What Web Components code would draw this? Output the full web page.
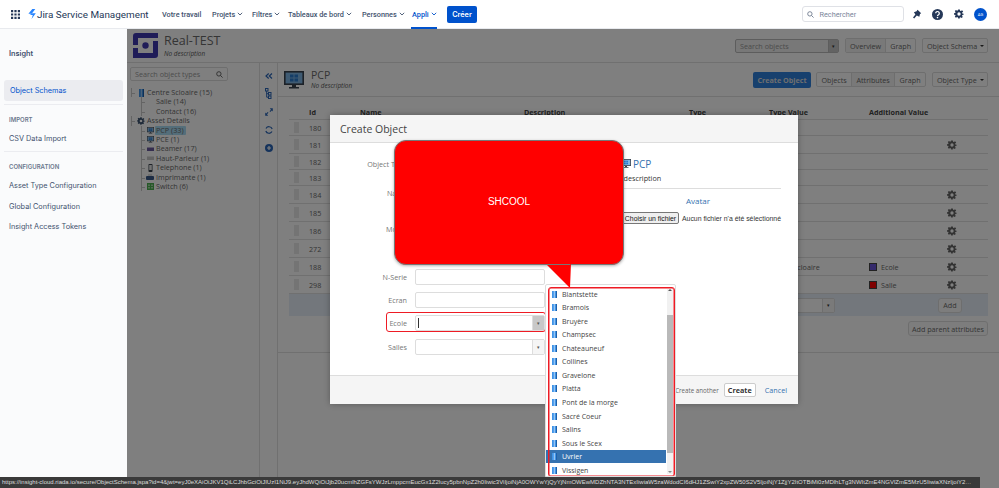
<!DOCTYPE html>
<html>
<head>
<meta charset="utf-8">
<title>Insight</title>
<style>
  html, body { margin: 0; height: 100%; overflow: hidden; background: #fff; }
  body { font-family: "Open Sans", "Liberation Sans", sans-serif; }
</style>
</head>
<body>
<insight-page></insight-page>
<script>
const caret = `<svg class="chev" width="6" height="4" viewBox="0 0 6 4"><path d="M.8.8 3 3 5.2.8" fill="none" stroke="currentColor" stroke-width=".9"/></svg>`;
const gear = `<svg width="10" height="10" viewBox="0 0 24 24"><path fill="currentColor" fill-rule="evenodd" d="M10 1h4l.6 3.2 2 .8 2.7-1.800 2.800 2.800L19.300 8.700l.8 2L23 11.300v2.400l-2.900.6-.8 2 1.800 2.700-2.800 2.800-2.700-1.800-2 .8L14 23h-4l-.6-2.900-2-.8-2.700 1.800-2.800-2.800 1.800-2.700-.8-2L0 13.700v-3.400l2.900-.6.8-2L1.900 5l2.800-2.800 2.700 1.800 2-.8zM12 8a4 4 0 1 0 0 8 4 4 0 0 0 0-8z"/></svg>`;
const bookIcon = `<svg width="5" height="7" viewBox="0 0 7 9" preserveAspectRatio="none"><rect width="7" height="9" fill="#3f94e8"/><rect x="2.600" width="1" height="9" fill="#d7e9fa"/><rect x="5.600" width="1.400" height="9" fill="#1d5fa8"/></svg>`;
const pcIcon = (w, h) => `<svg width="${w}" height="${h}" viewBox="0 0 20 18"><rect x=".8" y=".8" width="18.400" height="12.400" fill="#7fb6e6" stroke="#39424e" stroke-width="1.600"/><path d="M6 3.500h3.500v3H6zM10.500 3.500H14v3h-3.500zM6 7.500h3.500v3H6zM10.500 7.500H14v3h-3.500z" fill="#2b7cd0"/><path d="M8 14h4v2h3v1.500H5V16h3z" fill="#39424e"/></svg>`;

function shadow(host, html) {
  host.attachShadow({mode: "open"}).innerHTML = html;
}

class JiraTopbar extends HTMLElement {
  connectedCallback() {
    const items = [["Votre travail", 0, 50], ["Projets", 1, 40], ["Filtres", 1, 36], ["Tableaux de bord", 1, 74], ["Personnes", 1, 50], ["Appli", 1, 25]];
    shadow(this, `
<style>
  :host { display: flex; align-items: center; height: 29px; padding-left: 11px; background: #fff; color: #42526e;
    font-family: Roboto, Inter, sans-serif; font-size: 7.300px; border-bottom: 1px solid #e8eaee; position: relative; box-sizing: border-box; }
  .logo { display: flex; align-items: center; gap: 1px; margin-left: 8px; color: #253858; font-size: 9.900px; width: 134px; flex: none; white-space: nowrap; }
  nav { display: flex; height: 100%; }
  nav span { display: flex; align-items: center; gap: 2px; position: relative; font-weight: 500; white-space: nowrap; }
  nav .on { color: #0052cc; }
  nav .on::after { content: ""; position: absolute; left: -1px; right: 0; bottom: -1px; height: 2px; background: #0052cc; }
  .create { margin-left: 10px; width: 30px; height: 17px; border: 0; border-radius: 2px; background: #0052cc; color: #fff;
    font: 600 7.300px Inter, Roboto, sans-serif; padding: 0; }
  .right { margin-left: auto; display: flex; align-items: center; gap: 10.500px; padding-right: 12px; color: #253858; }
  .search { display: flex; align-items: center; gap: 6px; width: 102px; height: 16px; box-sizing: border-box; border: 1px solid #dfe1e6; border-radius: 3px;
    padding-left: 4px; color: #7a869a; margin-right: -2.500px; font-size: 7.300px; }
  .avatar { width: 13px; height: 13px; border-radius: 50%; background: #0052cc; color: #fff; font-size: 4px; display: flex; align-items: center; justify-content: center; }
</style>
<svg width="9" height="9" viewBox="0 0 9 9" fill="#253858"><path d="M0 0h2.200v2.200H0zM3.400 0h2.200v2.200H3.400zM6.800 0H9v2.200H6.800zM0 3.400h2.200v2.200H0zM3.400 3.400h2.200v2.200H3.400zM6.800 3.400H9v2.200H6.800zM0 6.800h2.200V9H0zM3.400 6.800h2.200V9H3.400zM6.800 6.800H9V9H6.800z"/></svg>
<div class="logo"><svg width="8" height="10" viewBox="0 0 8 10"><path fill="#2684ff" d="M4.300 0 .4 4.700h3.300L7.300 0zM4.600 4.300h3.200L3.500 10l1.300-4H1.700z"/></svg>Jira Service Management</div>
<nav>${items.map(([t, c, w], i) => `<span class="${i == 5 ? "on" : ""}" style="width:${w}px">${t}${c ? caret : ""}</span>`).join("")}</nav>
<button class="create">Créer</button>
<div class="right">
  <div class="search"><svg width="7" height="7" viewBox="0 0 8 8"><circle cx="3.300" cy="3.300" r="2.500" fill="none" stroke="#6b778c"/><path d="m5.200 5.200 2.300 2.300" stroke="#6b778c"/></svg>Rechercher</div>
  <svg width="10" height="10" viewBox="0 0 10 10"><path fill="#253858" d="M5.500.8 9.200 4.300 8 5 7.300 7.800 4.800 6.500 2.200 9.500 1 8.600 3.400 5.500 1.900 3.300 4.600 2.300z"/></svg>
  <svg width="11" height="11" viewBox="0 0 11 11"><circle cx="5.500" cy="5.500" r="5.500" fill="#253858"/><path d="M3.700 4.300a1.800 1.800 0 1 1 2.800 1.500c-.7.400-1 .7-1 1.300" fill="none" stroke="#fff" stroke-width="1.200"/><circle cx="5.500" cy="8.600" r=".8" fill="#fff"/></svg>
  <span style="display:flex;color:#253858">${gear}</span>
  <div class="avatar">AG</div>
</div>`);
  }
}
customElements.define("jira-topbar", JiraTopbar);

class InsightSidebar extends HTMLElement {
  connectedCallback() {
    shadow(this, `
<style>
  :host { display: block; width: 127px; flex: none; background: #fafbfc; color: #42526e; font-family: Inter, Roboto, sans-serif; font-size: 7.300px; box-sizing: border-box; padding: 0 4px; }
  .title { font-weight: 600; padding: 20px 5px 0; height: 51px; box-sizing: border-box; }
  .on { height: 21px; background: #ebecf0; border-radius: 3px; color: #0052cc; display: flex; align-items: center; padding-left: 6px; margin-bottom: 3px; }
  hr { border: 0; border-top: 1px solid #ebecf0; margin: 0; }
  h4 { margin: 0; font-size: 6px; font-weight: 600; color: #6b778c; padding: 11px 5px 4px; line-height: 8px; }
  a { display: flex; align-items: center; height: 20.700px; padding-left: 5px; }
</style>
<div class="title">Insight</div>
<div class="on">Object Schemas</div>
<hr>
<h4>IMPORT</h4>
<a>CSV Data Import</a>
<hr style="margin-top:2.300px">
<h4>CONFIGURATION</h4>
<a>Asset Type Configuration</a>
<a>Global Configuration</a>
<a>Insight Access Tokens</a>`);
  }
}
customElements.define("insight-sidebar", InsightSidebar);

class TypeTree extends HTMLElement {
  connectedCallback() {
    const swatch = c => `<svg width="7" height="7" viewBox="0 0 7 7"><rect y="1.500" width="7" height="3.500" fill="${c}"/></svg>`;
    const rows = [
      ["Centre Scloaire (15)", 0, bookIcon.replace('height="7"', 'height="8"')],
      ["Salle (14)", 1, ""],
      ["Contact (16)", 1, ""],
      ["Asset Details", 0, `<svg width="8" height="8" viewBox="0 0 24 24" style="color:#39506e">${gear.replace(/<svg[^>]*>|<\/svg>/g, "")}</svg>`],
      ["PCP (33)", 1, pcIcon(7, 7), "sel"],
      ["PCE (1)", 1, pcIcon(7, 7)],
      ["Beamer (17)", 1, swatch("#6a5a9e")],
      ["Haut-Parleur (1)", 1, swatch("#c8c8c8")],
      ["Telephone (1)", 1, `<svg width="7" height="8" viewBox="0 0 7 8"><rect x="1.500" width="4" height="8" rx=".8" fill="#39424e"/><rect x="2.200" y="1" width="2.600" height="5" fill="#e8e8e8"/></svg>`],
      ["Imprimante (1)", 1, `<svg width="8" height="7" viewBox="0 0 8 7"><rect y="2" width="8" height="4" rx="1" fill="#3b5a8a"/><rect x="2" width="4" height="2" fill="#ddd"/></svg>`],
      ["Switch (6)", 1, `<svg width="7" height="7" viewBox="0 0 7 7"><rect width="7" height="7" fill="#4cb050"/><path d="M1 1.500h2v1.500H1zM4 1.500h2v1.500H4zM1 4h2v1.500H1zM4 4h2v1.500H4z" fill="#a5dba7"/></svg>`]
    ];
    shadow(this, `
<style>
  :host { display: block; color: #6a6a6a; font-size: 7.200px; line-height: 9.400px; padding-top: 7px; }
  .row { display: flex; align-items: center; gap: 2px; height: 9.400px; white-space: nowrap; position: relative; padding-left: 7px; }
  .row.sub { padding-left: 16px; }
  .row.noicon { padding-left: 26px; }
  .row::before { content: ""; position: absolute; left: 1px; top: 0; bottom: 0; border-left: 1px solid #c8c8c8; }
  .row.sub::before { left: 11px; }
  .row::after { content: ""; position: absolute; left: 1px; top: 5px; width: 4px; border-top: 1px solid #c8c8c8; }
  .row.sub::after { left: 11px; }
  .sel span { background: #a9dcf5; border-radius: 1px; padding: 0 2px 0 1px; margin-left: -1px; }
  .wrap { display: inline-flex; width: 8px; justify-content: center; flex: none; }
</style>
${rows.map(([t, sub, icon, sel]) => `<div class="row ${sub ? "sub" : ""} ${icon ? "" : "noicon"} ${sel || ""}">${icon ? `<i class="wrap">${icon}</i>` : ""}<span>${t}</span></div>`).join("")}`);
  }
}
customElements.define("type-tree", TypeTree);

class AttrTable extends HTMLElement {
  connectedCallback() {
    const rows = [
      ["180", 16, 0], ["181", 18, 1], ["182", 16, 0], ["183", 16, 0], ["184", 18, 1], ["185", 18, 1], ["186", 18, 1], ["272", 18, 1],
      ["188", 18, 1, "Centre Scloaire", "Ecole", "#6a55d8"], ["298", 18, 1, "", "Salle", "#ff0000"]
    ];
    shadow(this, `
<style>
  :host { display: block; margin: 7px 11px 0; font-size: 7.200px; color: #6a6a6a; }
  .row { display: grid; grid-template-columns: 20px 51px 164px 165px 80px 100px 78px 1fr; align-items: center; border-bottom: 1px solid #e0e0e0; box-sizing: border-box; }
  .head { height: 16px; font-weight: 700; color: #444; }
  .head span:last-child { grid-column: span 2; }
  .grip { width: 5px; height: 11px; background: #e8e8e8; margin-left: 5px; }
  .val { display: flex; align-items: center; gap: 4px; }
  .val b { width: 8px; height: 8px; border: 1px solid #444; box-sizing: border-box; }
  .gear { color: #666; display: flex; }
  .add { height: 22px; background: #e6eff8; display: grid; grid-template-columns: 1fr auto; align-items: center; padding: 0 26px 0 0; }
  .combo { justify-self: end; width: 100px; height: 15px; margin-right: 103px; background: #fff; border: 1px solid #ddd; border-radius: 2px; box-sizing: border-box; display: flex; justify-content: flex-end; }
  .combo i { width: 11px; border-left: 1px solid #ddd; background: #f5f5f5; font-size: 5px; font-style: normal; text-align: center; line-height: 13px; color: #333; }
  .btn { border: 1px solid #ddd; border-radius: 3px; background: #fafafa; display: inline-flex; align-items: center; justify-content: center; box-sizing: border-box; }
  .parent { display: flex; justify-content: flex-end; margin-top: 5px; padding-bottom: 16px; border-bottom: 1px solid #e0e0e0; margin-inline: -11px; padding-right: 11px; }
</style>
<div class="row head"><span></span><span>Id</span><span>Name</span><span>Description</span><span>Type</span><span>Type Value</span><span>Additional Value</span></div>
${rows.map(([id, h, g, tv, av, c]) => `<div class="row" style="height:${h}px"><div class="grip"></div><span>${id}</span><span></span><span></span><span></span><span>${tv || ""}</span><span class="val">${av ? `<b style="background:${c}"></b>${av}` : ""}</span><span class="gear">${g ? gear : ""}</span></div>`).join("")}
<div class="add"><div class="combo"><i>▾</i></div><span class="btn" style="width:24px;height:15px">Add</span></div>
<div class="parent"><span class="btn" style="width:80px;height:15px">Add parent attributes</span></div>`);
  }
}
customElements.define("attr-table", AttrTable);

class SchemaPanel extends HTMLElement {
  connectedCallback() {
    shadow(this, `
<style>
  :host { display: flex; flex-direction: column; flex: 1; min-width: 0; background: #fff; color: #6a6a6a; font-size: 7.200px; }
  header { height: 34px; display: flex; align-items: center; padding: 0 11px 0 6px; border-bottom: 1px solid #e0e0e0; box-sizing: border-box; flex: none; }
  .name { margin-left: 6px; font-size: 12.500px; line-height: 17px; margin-top: -1px; }
  em { font-size: 6.400px; display: block; line-height: 9px; color: #555; }
  .pcp em { line-height: 8px; }
  .tools { margin-left: auto; display: flex; gap: 6px; align-items: center; }
  .group { display: flex; border: 1px solid #ddd; border-radius: 2px; height: 15px; box-sizing: border-box; background: #fff; }
  .group span { display: flex; flex: auto; align-items: center; justify-content: center; padding: 0 4px; border-left: 1px solid #ddd; gap: 3px; white-space: nowrap; }
  .group span:first-child { border-left: 0; }
  .group .cur { background: #f2f2f2; }
  .drop::after { content: ""; border: 2px solid transparent; border-top-color: #333; border-bottom: 0; }
  .find { width: 104px; height: 14px; border: 1px solid #bbb; box-sizing: border-box; border-radius: 2px; display: flex; color: #999; background: #f0f0f0; padding-left: 4px; align-items: center; justify-content: space-between; }
  .find i { width: 9px; height: 100%; background: #c6c6c6; border-left: 1px solid #bbb; font-style: normal; font-size: 5px; text-align: center; line-height: 12px; color: #333; }
  .body { display: flex; flex: 1; min-height: 0; }
  .left { width: 133px; flex: none; border-right: 1px solid #e0e0e0; padding: 4px 3px 0; box-sizing: border-box; }
  .typesearch { height: 14px; width: 98px; box-sizing: border-box; border: 1px solid #ddd; border-radius: 2px; background: #fff; color: #999; display: flex; align-items: center; justify-content: space-between; padding: 0 4px; }
  .rail { width: 18px; flex: none; border-right: 1px solid #e0e0e0; display: grid; grid-auto-rows: 18.200px; justify-items: center; align-items: center; align-content: start; padding-top: 3.500px; box-sizing: border-box; color: #2a66b8; }
  .content { flex: 1; min-width: 0; }
  .content > .top { height: 34px; display: flex; align-items: center; padding: 0 11px 0 6px; border-bottom: 1px solid #e0e0e0; box-sizing: border-box; }
  .pcp { margin-left: 7px; font-size: 10.500px; line-height: 13px; }
  .primary { height: 16px; width: 58px; box-sizing: border-box; border-radius: 2px; background: #2f80dc; color: #ddd; font-weight: 700; display: flex; align-items: center; justify-content: center; margin-right: -1px; }
</style>
<header>
  <svg width="25" height="25" viewBox="0 0 25 25"><path fill="#3f38b0" d="M3 0h22v5H5v7H0V3a3 3 0 0 1 3-3zM25 8v14a3 3 0 0 1-3 3H0v-5h20V8z"/><path fill="#3f38b0" d="M0 15h5v5H0z"/><circle cx="12.500" cy="12.500" r="3.200" fill="#3f38b0"/></svg>
  <div class="name">Real-TEST<em>No description</em></div>
  <div class="tools">
    <div class="find">Search objects<i>▾</i></div>
    <div class="group" style="width:71px"><span class="cur">Overview</span><span>Graph</span></div>
    <div class="group" style="width:66px"><span class="drop">Object Schema</span></div>
  </div>
</header>
<div class="body">
  <div class="left">
    <div class="typesearch">Search object types<svg width="7" height="7" viewBox="0 0 8 8"><circle cx="3.300" cy="3.300" r="2.500" fill="none" stroke="#555"/><path d="m5.200 5.200 2.300 2.300" stroke="#555"/></svg></div>
    <type-tree></type-tree>
  </div>
  <div class="rail">
    <svg width="8" height="6" viewBox="0 0 8 6"><path d="M3.700.5 1 3l2.700 2.500M7 .5 4.300 3 7 5.500" fill="none" stroke="currentColor" stroke-width="1.200"/></svg>
    <svg width="7" height="11" viewBox="0 0 7 11" fill="none" stroke="currentColor"><rect x=".5" y=".5" width="2.500" height="2.500"/><rect x="3.500" y="4.500" width="2.500" height="2.500"/><rect x="3.500" y="8" width="2.500" height="2.500"/><path d="M1.700 3v6.200h1.800M1.700 5.700h1.800"/></svg>
    <svg width="8" height="8" viewBox="0 0 8 8" fill="currentColor"><path d="M7.800.2v3.300L6.800 2.500 5.300 4 4.500 3.200 6 1.700 4.800.2zM.2 7.800V4.500l1 1 1.500-1.500.8.800L2 6.300l1.200 1.500z"/></svg>
    <svg width="8" height="8" viewBox="0 0 8 8" fill="none" stroke="currentColor" stroke-width="1.200"><path d="M1 2.500A3.400 3.400 0 0 1 7.200 3M7 5.500A3.400 3.400 0 0 1 .8 5"/></svg>
    <svg width="8" height="8" viewBox="0 0 8 8"><circle cx="4" cy="4" r="4" fill="currentColor"/><path d="M4 2v4M2 4h4" stroke="#fff" stroke-width="1.200"/></svg>
  </div>
  <div class="content">
    <div class="top">
      ${pcIcon(20, 18)}
      <div class="pcp">PCP<em>No description</em></div>
      <div class="tools">
        <div class="primary">Create Object</div>
        <div class="group" style="width:110px"><span>Objects</span><span class="cur">Attributes</span><span>Graph</span></div>
        <div class="group" style="width:56px"><span class="drop">Object Type</span></div>
      </div>
    </div>
    <attr-table></attr-table>
  </div>
</div>`);
  }
}
customElements.define("schema-panel", SchemaPanel);

class CreateDialog extends HTMLElement {
  connectedCallback() {
    const field = (label, top, extra) => `<div class="field ${extra || ""}" style="margin-top:${top}px"><label>${label}</label><div class="input">${extra == "ecole" ? '<b class="cursor"></b>' : ""}${extra ? "<i>▾</i>" : ""}</div></div>`;
    shadow(this, `
<style>
  :host { position: absolute; left: 330px; top: 115px; width: 468px; height: 289px; background: #fff; border-radius: 2px; box-shadow: 0 0 6px rgba(0,0,0,.3);
    display: flex; flex-direction: column; font-size: 7.200px; color: #333; }
  header { height: 28px; flex: none; box-sizing: border-box; background: #f5f5f5; border-bottom: 1px solid #ddd; font-size: 10.500px; display: flex; align-items: center; padding-left: 10px; color: #444; }
  .body { flex: 1; position: relative; }
  .info { margin-left: 282px; padding-top: 13px; width: 169px; }
  .ptitle { display: flex; align-items: center; gap: 2px; font-size: 10px; color: #3572b0; height: 15px; padding-left: 9px; }
  .desc { height: 17px; line-height: 14px; border-bottom: 1px solid #ddd; }
  .avatar { color: #3572b0; font-size: 8px; padding: 7px 0 0 74px; line-height: 10px; }
  .file { display: flex; align-items: center; gap: 3px; margin-top: 6px; padding-left: 10px; font-family: "Liberation Sans", sans-serif; font-size: 6.900px; white-space: nowrap; }
  .file button { width: 61px; height: 12px; padding: 0; font: inherit; border: 1px solid #777; border-radius: 2px; background: #efefef; color: #111; }
  .labels { position: absolute; left: 0; top: 0; width: 77px; text-align: right; color: #777; font-size: 7.200px; }
  .labels div { position: absolute; right: 0; white-space: nowrap; }
  .field { display: grid; grid-template-columns: 77px 130px; column-gap: 8px; align-items: center; height: 16px; position: relative; }
  .field label { text-align: right; color: #777; font-size: 7.200px; }
  .input { height: 16px; border: 1px solid #ddd; border-radius: 2px; box-sizing: border-box; position: relative; background: #fff; }
  .input i { position: absolute; right: 0; top: 0; bottom: 0; width: 11px; border-left: 1px solid #ddd; background: #f5f5f5; color: #555; font-style: normal; font-size: 5px; text-align: center; line-height: 14px; }
  .ecole .input i { background: #c8c8c8; }
  .ecole::after { content: ""; position: absolute; left: 56px; top: -3px; width: 160px; height: 19.500px; border: 1.500px solid #ee1b24; border-radius: 3px; box-sizing: border-box; pointer-events: none; }
  .cursor { position: absolute; left: 2px; top: 2px; bottom: 2px; border-left: 1px solid #333; }
  footer { height: 29px; flex: none; box-sizing: border-box; background: #f5f5f5; border-top: 1px solid #ddd; display: flex; align-items: center; justify-content: flex-end; padding-right: 11px; gap: 5px; color: #666; }
  footer span { font-size: 6.200px; }
  footer button { width: 32px; height: 14px; padding: 0; background: #fff; border: 1px solid #ccc; border-radius: 2px; font: 700 7.200px "Open Sans", sans-serif; color: #333; }
  footer a { color: #3572b0; margin-left: 4px; }
</style>
<header>Create Object</header>
<div class="body">
  <div class="labels"><div style="top:16px">Object Type</div><div style="top:45px">Name</div><div style="top:81px">Model</div></div>
  <div class="info">
    <div class="ptitle">${pcIcon(10, 9)}PCP</div>
    <div class="desc">No description</div>
    <div class="avatar">Avatar</div>
    <div class="file"><button>Choisir un fichier</button>Aucun fichier n'a été sélectionné</div>
  </div>
</div>
<div style="position:absolute;left:0;top:154px;width:100%">
  ${field("N-Serie", 0)}${field("Ecran", 7)}${field("Ecole", 7, "ecole")}${field("Salles", 8, "salles")}
</div>
<footer><span>Create another</span><button>Create</button><a>Cancel</a></footer>`);
  }
}
customElements.define("create-dialog", CreateDialog);

class ObjectDropdown extends HTMLElement {
  connectedCallback() {
    const names = ["Blantstette", "Bramois", "Bruyère", "Champsec", "Chateauneuf", "Collines", "Gravelone", "Platta", "Pont de la morge", "Sacré Coeur", "Salins", "Sous le Scex", "Uvrier", "Vissigen"];
    shadow(this, `
<style>
  :host { position: absolute; left: 545px; top: 284px; width: 131px; height: 193px; background: #fff; border: 1px solid #ddd; border-radius: 2px 2px 0 0; box-sizing: border-box; font-size: 7px; color: #444; overflow: hidden; }
  .frame { position: absolute; left: 2px; top: 2px; width: 127px; height: 189.500px; border: 1px solid #ee1b24; border-radius: 3px; box-sizing: border-box; box-shadow: inset 0 0 0 .5px #ee1b24; z-index: 2; pointer-events: none; }
  ul { margin: 0; padding: 2.500px 0 0; list-style: none; width: 120px; }
  li { display: flex; align-items: center; gap: 5px; height: 13.540px; padding-left: 6px; white-space: nowrap; }
  li.on { background: #3572b0; color: #fff; }
  .bar { position: absolute; right: 2px; top: 4px; bottom: 2px; width: 6.500px; background: #f1f1f1; }
  .thumb { position: absolute; left: 0; right: 0; top: 26px; height: 138px; background: #b9b9b9; }
  .bar::before, .bar::after { content: ""; position: absolute; left: 1.500px; border: 2px solid transparent; }
  .bar::before { top: 0; border-bottom-color: #555; border-top: 0; }
  .bar::after { bottom: 1px; border-top-color: #888; border-bottom: 0; }
</style>
<ul>${names.map(n => `<li class="${n == "Uvrier" ? "on" : ""}">${bookIcon}${n}</li>`).join("")}</ul>
<div class="bar"><div class="thumb"></div></div>
<div class="frame"></div>`);
  }
}
customElements.define("object-dropdown", ObjectDropdown);

class RedCallout extends HTMLElement {
  connectedCallback() {
    shadow(this, `
<style>
  :host { position: absolute; left: 394px; top: 140px; width: 230px; height: 125px; background: #f00; border: 1px solid #777; border-radius: 12px; box-sizing: border-box;
    color: #fff; font: 10px "Liberation Sans", sans-serif; display: flex; align-items: center; justify-content: center; padding-bottom: 2px; box-shadow: 0 1px 3px rgba(0,0,0,.3); }
  svg { position: absolute; left: 149px; top: 122px; }
</style>
<slot></slot>
<svg width="28" height="26" viewBox="0 0 28 26"><path d="M1 0 3 2 26 2 27 0 26 25z" fill="#f00"/></svg>`);
  }
}
customElements.define("red-callout", RedCallout);

class LinkStatus extends HTMLElement {
  connectedCallback() {
    shadow(this, `
<style>
  :host { position: absolute; left: 0; bottom: 0; height: 11px; width: 980px; background: #3a3a3a; color: #ddd; font: 6px/11px "Liberation Sans", sans-serif; white-space: nowrap; overflow: hidden; padding-left: 2px; box-sizing: border-box; }
</style><slot></slot>`);
  }
}
customElements.define("link-status", LinkStatus);

class InsightPage extends HTMLElement {
  connectedCallback() {
    shadow(this, `
<style>
  :host { display: flex; flex-direction: column; height: 488px; position: relative; overflow: hidden; }
  .row { display: flex; flex: 1; min-height: 0; }
  .area { flex: 1; min-width: 0; position: relative; display: flex; }
  .dim { position: absolute; inset: 0; background: rgba(0,0,0,.5); }
</style>
<jira-topbar></jira-topbar>
<div class="row">
  <insight-sidebar></insight-sidebar>
  <div class="area"><schema-panel></schema-panel><div class="dim"></div></div>
</div>
<create-dialog></create-dialog>
<object-dropdown></object-dropdown>
<red-callout>SHCOOL</red-callout>
<link-status>https://insight-cloud.riada.io/secure/ObjectSchema.jspa?id=4&amp;jwt=eyJ0eXAiOiJKV1QiLCJhbGciOiJIUzI1NiJ9.eyJhdWQiOiJjb20ucmlhZGFsYWJzLmppcmEucGx1Z2lucy5pbnNpZ2h0Iiwic3ViIjoiNjA0OWYwYjQyYjNmOWEwMDZhNTA3NTExIiwiaW5zaWdodCI6dHJ1ZSwiY2xpZW50S2V5IjoiNjY1ZjjY2ItOTBiMi0zMDlhLTg3NWItZmE4NGVlZmE5MzU5IiwiaXNzIjoiY2…</link-status>`);
  }
}
customElements.define("insight-page", InsightPage);
</script>
</body>
</html>
